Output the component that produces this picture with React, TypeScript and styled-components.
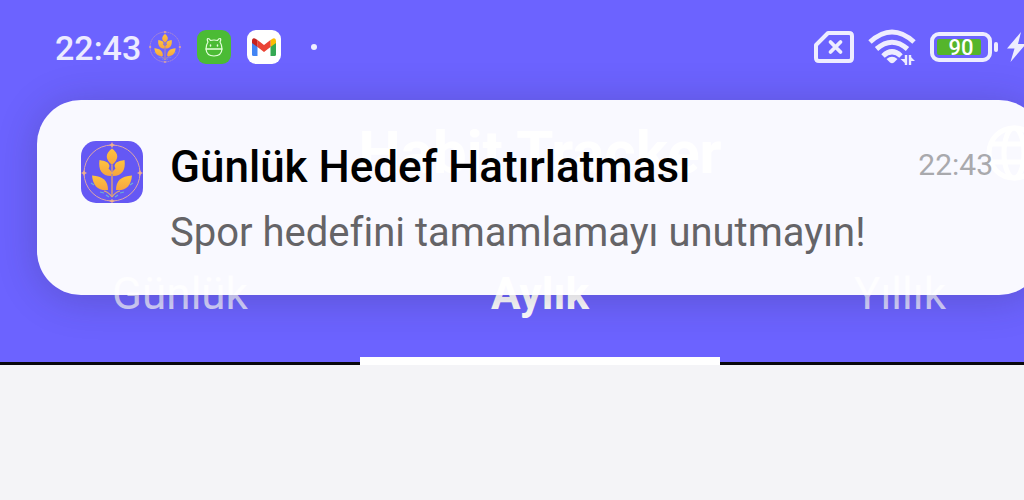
import React from "react";
import styled, { createGlobalStyle } from "styled-components";

const GlobalStyle = createGlobalStyle`
  *, *::before, *::after { box-sizing: border-box; }
  html, body { margin: 0; overflow-x: hidden; background: #f4f4f7; }
  body { font-family: Roboto, "Noto Sans", sans-serif; font-variant-ligatures: none; }
`;

const Viewport = styled.div`
  width: 100%;
  min-height: 100vh;
  overflow: hidden;
  background: #f4f4f7;
`;

/* The phone screen is a little wider than the window that shows it. */
const Screen = styled.div`
  position: relative;
  width: calc(100% + 56px);
`;

const Header = styled.header`
  background: #6c63ff;
  color: #fff;
  border-bottom: 3px solid #08080c;
`;

const StatusBar = styled.div`
  display: flex;
  align-items: center;
  justify-content: space-between;
  height: 94px;
  padding: 0 54px 0 55px;
`;

const StatusGroup = styled.div<{ $gap: number }>`
  display: flex;
  align-items: center;
  gap: ${(p) => p.$gap}px;
`;

const Clock = styled.time`
  font-size: 34px;
  line-height: 40px;
  font-weight: 500;
  color: #ecebff;
  padding-top: 2px;
`;

const NotificationIcons = styled.div`
  display: flex;
  align-items: center;
  gap: 16px;
`;

const Dot = styled.span`
  width: 6px;
  height: 6px;
  margin-left: 14px;
  border-radius: 50%;
  background: #efeeff;
`;

const AppBar = styled.div`
  display: grid;
  grid-template-columns: 96px 1fr 96px;
  align-items: center;
  height: 118px;
  margin-bottom: 15px;
`;

const AppTitle = styled.h1`
  grid-column: 2;
  margin: 0;
  text-align: center;
  font-size: 60px;
  line-height: 64px;
  font-weight: 700;
`;

const LanguageButton = styled.button`
  display: flex;
  padding: 0;
  border: 0;
  background: none;
  color: #fff;
`;

const TabList = styled.nav`
  display: grid;
  grid-template-columns: repeat(3, 1fr);
  height: 138px;
  margin-bottom: -3px;
`;

const Tab = styled.button<{ $active?: boolean }>`
  position: relative;
  padding: 4px 0 0;
  border: 0;
  border-bottom: ${(p) => (p.$active ? "8px solid #fff" : "8px solid transparent")};
  background: none;
  color: ${(p) => (p.$active ? "#fff" : "rgba(255, 255, 255, 0.72)")};
  font-family: inherit;
  font-size: 44px;
  line-height: 52px;
  font-weight: ${(p) => (p.$active ? 700 : 400)};
`;

const Notification = styled.section`
  position: absolute;
  top: 100px;
  left: 37px;
  right: 37px;
  display: grid;
  grid-template-columns: 62px 1fr auto;
  column-gap: 27px;
  align-items: start;
  padding: 41px 50px 36px 44px;
  border-radius: 44px;
  background: rgba(255, 255, 255, 0.96);
  box-shadow: 0 4px 40px rgba(40, 35, 60, 0.24);
`;

const Message = styled.div`
  display: grid;
  row-gap: 14px;
`;

const MessageTitle = styled.h2`
  margin: 0;
  font-size: 44px;
  line-height: 52px;
  font-weight: 500;
  color: #000;
  white-space: nowrap;
`;

const MessageBody = styled.p`
  margin: 0;
  font-size: 40px;
  line-height: 52px;
  color: #656467;
  white-space: nowrap;
`;

const MessageTime = styled.time`
  padding-top: 6px;
  font-size: 30px;
  line-height: 36px;
  color: #a9a9ad;
`;

function PlantMark({ size, filled }: { size: number; filled?: boolean }) {
  return (
    <svg width={size} height={size} viewBox={filled ? "0 0 62 62" : "1 2 60 60"} aria-hidden="true">
      <defs>
        <linearGradient id="petal" x1="0" y1="0" x2="0" y2="1">
          <stop offset="0" stopColor="#ffc43e" />
          <stop offset="1" stopColor="#f6a440" />
        </linearGradient>
      </defs>
      {filled && <rect width="62" height="62" rx="15" fill="#6558f4" />}
      <circle cx="31" cy="32" r="28" fill="none" stroke="#dca6a8" strokeWidth="1" strokeDasharray={filled ? undefined : "3 1"} />
      <g fill="#efb08d">
        <path d="M31 1l1 2 2 1-2 1-1 2-1-2-2-1 2-1z" />
        <path d="M31 58l1 1 2 1-2 1-1 1-1-1-2-1 2-1z" />
        <path d="M3 29l1 2 2 1-2 1-1 2-1-2-2-1 2-1z" />
        <path d="M59 29l1 2 2 1-2 1-1 2-1-2-2-1 2-1z" />
      </g>
      <path d="M31 24v32M31 33l-4-5M31 33l4-5" fill="none" stroke="#e5a46c" strokeWidth="1.3" />
      <g fill="url(#petal)">
        <path d="M31 24C24 18 24 13 31 7.500C38 13 38 18 31 24Z" />
        <path d="M30 35C21 35 17 29 18.500 19C24 20 28 21 28.500 25L27.500 28L30 30Z" />
        <path d="M32 35C41 35 45 29 43.500 19C38 20 34 21 33.500 25L34.500 28L32 30Z" />
        <path d="M27 49C17 50 12 45 11 34.500C22 35 27 40 27 49Z" />
        <path d="M35 49C45 50 50 45 51 34.500C40 35 35 40 35 49Z" />
      </g>
      <path d="M31 56C29 53 27 51 23 50M31 56C33 53 35 51 39 50" fill="none" stroke="#dba878" strokeWidth="1.2" />
      <path d="M10 42l3 2M52 42l-3 2M19 51l4 1M43 51l-4 1M25 54l3 2M37 54l-3 2" fill="none" stroke="#6db1d7" strokeWidth="1.2" />
    </svg>
  );
}

function RobotIcon() {
  return (
    <svg width="34" height="34" viewBox="0 0 34 34" aria-hidden="true">
      <rect width="34" height="34" rx="9" fill="#4bbb35" />
      <g fill="none" stroke="#e4ffdc" strokeWidth="1.2" strokeLinecap="round" strokeLinejoin="round">
        <path d="M11 12Q9.500 8.500 11 8.500Q12.500 8.500 13.500 10.500Q17 9.500 20.500 10.500Q21.500 8.500 23 8.500Q24.500 8.500 23 12Q25 15 25 19H9Q9 15 11 12Z" />
        <path d="M9 19H25Q24.500 26 17 26Q9.500 26 9 19Z" />
        <path d="M13.500 15v1M20.500 15v1" strokeWidth="1.500" />
      </g>
    </svg>
  );
}

function MailIcon() {
  return (
    <svg width="34" height="34" viewBox="0 0 34 34" aria-hidden="true">
      <rect width="34" height="34" rx="9" fill="#fff" />
      <path d="M5 12L10.500 16V26H6.500Q5 26 5 24.500Z" fill="#4285f4" />
      <path d="M29 12L23.500 16V26H27.500Q29 26 29 24.500Z" fill="#34a853" />
      <path d="M23.500 10L26 8.400Q29 7.500 29 11V13L23.500 17Z" fill="#fbbc04" />
      <path d="M10.500 10L17 15L23.500 10V17L17 22L10.500 17Z" fill="#ea4335" />
      <path d="M5 11Q5 7.500 8 8.400L10.500 10V17L5 13Z" fill="#c5221f" />
    </svg>
  );
}

function NoSimIcon() {
  return (
    <svg width="40" height="32" viewBox="0 0 40 32" aria-hidden="true">
      <g fill="none" stroke="#eeedff" strokeLinecap="round" strokeLinejoin="round">
        <path d="M14 2H35Q38 2 38 5V27Q38 30 35 30H5Q2 30 2 27V14Z" strokeWidth="4" />
        <path d="M16.500 11L26.500 21M26.500 11L16.500 21" strokeWidth="3.800" />
      </g>
    </svg>
  );
}

function WifiIcon() {
  return (
    <svg width="48" height="38" viewBox="0 0 48 38" aria-hidden="true">
      <g fill="none" stroke="#eeedff" strokeWidth="5">
        <path d="M2 14Q24 -6 46 14" />
        <path d="M8.500 21Q24 7.500 39.500 21" />
        <path d="M15 28Q24 19.500 33 28" />
      </g>
      <path d="M18.500 31Q24 26.500 29.500 31L26 34.500Q24 36 22 34.500Z" fill="#eeedff" />
      <path d="M38 27V37M42 37V27" fill="none" stroke="#eeedff" strokeWidth="2.400" />
      <path d="M39 37L32.500 31H39ZM41 27L47 33H41Z" fill="#eeedff" />
    </svg>
  );
}

const Battery = styled.div`
  display: flex;
  align-items: center;
  gap: 2px;

  &::after {
    content: "";
    width: 4px;
    height: 10px;
    border-radius: 2px;
    background: #eeedff;
  }
`;

const BatteryCase = styled.div`
  width: 62px;
  height: 30px;
  padding: 3px;
  border: 4px solid #eeedff;
  border-radius: 9px;
`;

const BatteryLevel = styled.div`
  display: flex;
  align-items: center;
  justify-content: center;
  width: 44px;
  height: 16px;
  padding: 2px 0 0 4px;
  border-radius: 2px;
  background: #55b52c;
  color: #fff;
  font-size: 22px;
  line-height: 24px;
  font-weight: 500;
`;

function BoltIcon() {
  return (
    <svg width="20" height="30" viewBox="0 0 20 30" aria-hidden="true">
      <path d="M15 0L1 16.500H8.500L4.500 30L20 12H12Z" fill="#eeedff" />
    </svg>
  );
}

function GlobeIcon() {
  return (
    <svg width="60" height="60" viewBox="0 0 60 60" fill="none" stroke="currentColor" strokeWidth="5" aria-hidden="true">
      <circle cx="30" cy="30" r="25" />
      <ellipse cx="30" cy="30" rx="10" ry="25" />
      <path d="M7 21H53M7 39H53" />
    </svg>
  );
}

export default function App() {
  return (
    <Viewport>
      <GlobalStyle />
      <Screen>
        <Header>
          <StatusBar>
            <StatusGroup $gap={8}>
              <Clock>22:43</Clock>
              <NotificationIcons>
                <PlantMark size={32} />
                <RobotIcon />
                <MailIcon />
                <Dot />
              </NotificationIcons>
            </StatusGroup>
            <StatusGroup $gap={14}>
              <NoSimIcon />
              <WifiIcon />
              <StatusGroup $gap={8}>
                <Battery>
                  <BatteryCase>
                    <BatteryLevel>90</BatteryLevel>
                  </BatteryCase>
                </Battery>
                <BoltIcon />
              </StatusGroup>
            </StatusGroup>
          </StatusBar>
          <AppBar>
            <AppTitle>Habit Tracker</AppTitle>
            <LanguageButton type="button" aria-label="Dil">
              <GlobeIcon />
            </LanguageButton>
          </AppBar>
          <TabList>
            <Tab type="button">Günlük</Tab>
            <Tab type="button" $active>
              Aylık
            </Tab>
            <Tab type="button">Yıllık</Tab>
          </TabList>
        </Header>
        <Notification>
          <PlantMark size={62} filled />
          <Message>
            <MessageTitle>Günlük Hedef Hatırlatması</MessageTitle>
            <MessageBody>Spor hedefini tamamlamayı unutmayın!</MessageBody>
          </Message>
          <MessageTime>22:43</MessageTime>
        </Notification>
      </Screen>
    </Viewport>
  );
}
